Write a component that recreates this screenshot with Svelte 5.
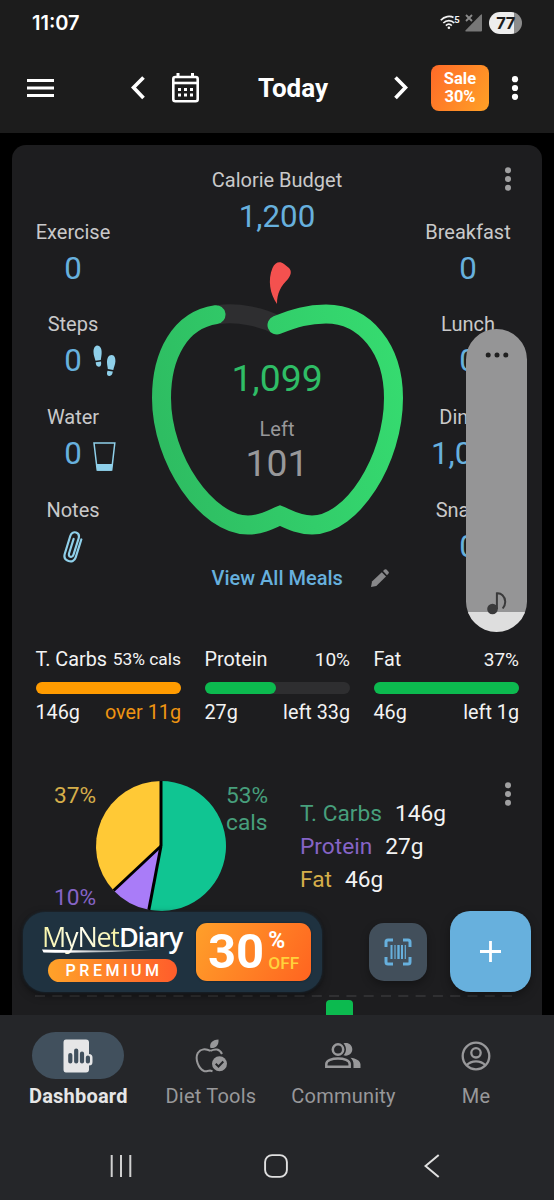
<script>
	//? variables
	let leftStats = [
		{ label: "Exercise", value: "0" },
		{ label: "Steps", value: "0", icon: "steps" },
		{ label: "Water", value: "0", icon: "water" },
		{ label: "Notes", icon: "clip" },
	];

	let meals = [
		{ label: "Breakfast", value: "0" },
		{ label: "Lunch", value: "0" },
		{ label: "Dinner", value: "1,099" },
		{ label: "Snacks", value: "0" },
	];

	let macros = [
		{ name: "T. Carbs", share: "53% cals", grams: "146g", rest: "over 11g", fill: 100, over: true },
		{ name: "Protein", share: "10%", grams: "27g", rest: "left 33g", fill: 49 },
		{ name: "Fat", share: "37%", grams: "46g", rest: "left 1g", fill: 100 },
	];

	let slices = [
		{ name: "T. Carbs", grams: "146g", percent: 53, color: "#10c592", tone: "green" },
		{ name: "Protein", grams: "27g", percent: 10, color: "#a97cf8", tone: "purple" },
		{ name: "Fat", grams: "46g", percent: 37, color: "#ffc936", tone: "yellow" },
	];

	let tabs = [
		{ label: "Dashboard", icon: "dashboard", active: true },
		{ label: "Diet Tools", icon: "diet" },
		{ label: "Community", icon: "people" },
		{ label: "Me", icon: "me" },
	];

	//? Logic
	const cx = 161;
	const cy = 66;
	const r = 65;

	function point(percent) {
		let angle = (percent / 100) * Math.PI * 2;
		return [cx + r * Math.sin(angle), cy - r * Math.cos(angle)];
	}

	function getPie(list) {
		let total = 0;
		return list.map((slice) => {
			let [x1, y1] = point(total);
			total += slice.percent;
			let [x2, y2] = point(total);
			let large = slice.percent > 50 ? 1 : 0;
			return {
				color: slice.color,
				x: x2,
				y: y2,
				d: `M${cx} ${cy}L${x1} ${y1}A${r} ${r} 0 ${large} 1 ${x2} ${y2}Z`,
			};
		});
	}

	let pie = getPie(slices);
</script>

<div class="screen">
	<header>
		<div class="status">
			<span class="clock">11:07</span>
			<svg class="wifi" width="20" height="16" viewBox="0 0 20 16">
				<g fill="none" stroke="#f2f2f2" stroke-width="1.7">
					<path d="M.8 5.3C4.5 1.2 10 .5 13.5 2.6" />
					<path d="M3.3 8C6.500 4.800 11.200 4.800 14.300 8" />
					<path d="M5.900 10.600C7.700 8.900 10 8.900 11.800 10.600" />
				</g>
				<circle cx="8.900" cy="12.800" r="1.300" fill="#f2f2f2" />
				<text x="14.300" y="7.700" font-size="9.500" font-weight="700" fill="#f2f2f2">5</text>
			</svg>
			<svg class="signal" width="18" height="18" viewBox="0 0 18 18">
				<path d="M17 .5V16.500Q17 17.500 16 17.500H1Q-.3 17.200 .6 16.200L15.500 1Q17 -.4 17 .5Z" fill="#777" />
				<path d="M1 1L7 7M7 1L1 7" stroke="#1c1c1c" stroke-width="4" />
				<path d="M1 1L7 7M7 1L1 7" stroke="#8a8a8a" stroke-width="1.900" />
			</svg>
			<span class="battery">77</span>
		</div>
		<div class="toolbar">
			<svg class="burger" width="27" height="20" viewBox="0 0 27 20">
				<path d="M0 2.500H27M0 10H27M0 17.500H27" stroke="#fff" stroke-width="2.800" />
			</svg>
			<svg class="prev" width="14" height="24" viewBox="0 0 14 24">
				<path d="M12.500 1.500L2.500 11.500L12.500 22" fill="none" stroke="#fff" stroke-width="3.700" />
			</svg>
			<svg class="calendar" width="27" height="30" viewBox="0 0 27 30">
				<path d="M6 0V5M20.500 0V5" stroke="#fff" stroke-width="3" />
				<rect x="1.300" y="4" width="24.400" height="24.300" rx="2" fill="none" stroke="#fff" stroke-width="2.600" />
				<path d="M1 10H26" stroke="#fff" stroke-width="2.600" />
				<path
					d="M6 16.500h3M12 16.500h3M18 16.500h3M6 22h3M12 22h3M18 22h3"
					stroke="#fff"
					stroke-width="3" />
			</svg>
			<h1>Today</h1>
			<svg width="14" height="24" viewBox="0 0 14 24">
				<path d="M1.500 1.500L11.500 11.500L1.500 22" fill="none" stroke="#fff" stroke-width="3.700" />
			</svg>
			<div class="sale"><span>Sale</span><span>30%</span></div>
			<svg width="8" height="24" viewBox="0 0 8 24" fill="#fff">
				<circle cx="4" cy="3.200" r="3.100" /><circle cx="4" cy="12" r="3.100" /><circle cx="4" cy="20.800" r="3.100" />
			</svg>
		</div>
	</header>

	<main>
		<div class="card">
			<section class="summary">
				<div class="column">
					{#each leftStats as stat}
						<div class="stat">
							<span class="label">{stat.label}</span>
							<div class="value-row">
								{#if stat.value}
									<span class="value">{stat.value}</span>
								{/if}
								{#if stat.icon === "steps"}
									<svg width="23" height="32" viewBox="0 0 23 32" fill="#8fd0ea">
										<path d="M4 .5C8 .5 9 5 8.600 9C8.300 12 8 13.500 7.800 15L2.500 15.700C2 13.500 .5 10.500 .5 7C.5 3.500 1.800 .8 4 .5Z" />
										<path d="M2.700 17.300L8 16.500C8.500 19.500 8 21.500 6 21.700C3.700 21.900 2.800 20 2.700 17.300Z" />
										<path d="M18.800 10C21.500 10.200 22.600 13 22.400 16.500C22.200 19.500 21 22 20.300 25L14.800 24C14.700 22 14 20 14 17.500C14 13 15.500 9.900 18.800 10Z" />
										<path d="M14.500 25.700L19.800 26.600C19.500 29.500 18.300 31.300 16 31C13.800 30.600 13.500 28.500 14.500 25.700Z" />
									</svg>
								{:else if stat.icon === "water"}
									<svg class="glass" width="23" height="30" viewBox="0 0 23 30">
										<path d="M1 1H21.800L18.700 28H4.200Z" fill="none" stroke="#8fd0ea" stroke-width="1.500" />
										<path d="M3.400 22H19.500L18.600 28.700H4.200Z" fill="#8fd0ea" />
									</svg>
								{:else if stat.icon === "clip"}
									<svg class="clip" width="20" height="32" viewBox="0 0 20 32" fill="none" stroke="#8fd0ea" stroke-width="2.200" stroke-linecap="round">
										<path d="M18.300 8.500L12.700 26.300C11.500 30 8.500 31 5.500 30C2.300 29 .7 26.500 1.800 22.800L7.200 5.300C8.200 2 10.500 .7 13 1.500C15.600 2.300 16.500 4.500 15.600 7.500L10.500 23.600C9.900 25.400 8.800 26.200 7.400 25.800C6 25.400 5.600 24 6.100 22.300L10.600 8" />
									</svg>
								{/if}
							</div>
						</div>
					{/each}
				</div>

				<div class="budget">
					<span class="label">Calorie Budget</span>
					<span class="value">1,200</span>
					<div class="apple">
						<svg width="286" height="280" viewBox="134 260 286 280">
							<defs>
								<linearGradient id="ring" x1="152" y1="400" x2="403" y2="340" gradientUnits="userSpaceOnUse">
									<stop offset="0" stop-color="#2ebd62" />
									<stop offset=".5" stop-color="#32cd6a" />
									<stop offset="1" stop-color="#36dc70" />
								</linearGradient>
							</defs>
							<path d="M277 304C270 294 267.500 280 272.500 268C275 262 280 261 284 264L289 268C292 271 291 275 288 279C281 286 277 293 277 304Z" fill="#f4514f" />
							<path d="M219 314.500C239 312 262 317 277 325" fill="none" stroke="#2e2e30" stroke-width="19" />
							<path
								d="M277 325C295 318 308 314 326 314C365 314 393.500 349 393.500 398C393.500 460 352 525 312 525C298 525 288 519 280 515.500C272 519 262 525 248 525C207 525 161.500 460 161.500 398C161.500 355 180 320 216 314.700"
								fill="none"
								stroke="url(#ring)"
								stroke-width="19"
								stroke-linecap="round" />
						</svg>
						<div class="inside">
							<span class="eaten">1,099</span>
							<span class="left">Left</span>
							<span class="remaining">101</span>
						</div>
					</div>
				</div>

				<div class="column">
					{#each meals as meal}
						<div class="stat">
							<span class="label">{meal.label}</span>
							<div class="value-row"><span class="value">{meal.value}</span></div>
						</div>
					{/each}
				</div>

				<svg class="more" width="8" height="24" viewBox="0 0 8 24" fill="#a0a0a1">
					<circle cx="4" cy="3.200" r="3" /><circle cx="4" cy="12" r="3" /><circle cx="4" cy="20.800" r="3" />
				</svg>
			</section>

			<div class="view-all">
				<span>View All Meals</span>
				<svg width="18" height="18" viewBox="0 0 18 18" fill="#88888a">
					<path d="M0 18L1 12.500L10.800 3.200L15 7.400L5.300 16.900Z" />
					<path d="M12 2L13.600 .6Q14.600 -.2 15.500 .6L17.500 2.700Q18.300 3.700 17.500 4.600L16 6.200Z" />
				</svg>
			</div>

			<section class="macros">
				{#each macros as macro}
					<div class="macro" class:over={macro.over}>
						<div class="macro-line">
							<span class="name">{macro.name}</span>
							<span class="share">{macro.share}</span>
						</div>
						<div class="bar"><div class="fill" style="width: {macro.fill}%"></div></div>
						<div class="macro-line">
							<span>{macro.grams}</span>
							<span class="rest">{macro.rest}</span>
						</div>
					</div>
				{/each}
			</section>

			<section class="breakdown">
				<svg class="pie" width="288" height="132" viewBox="12 0 288 132">
					{#each pie as slice}
						<path d={slice.d} fill={slice.color} />
					{/each}
					{#each pie as slice}
						<path d="M{cx} {cy}L{slice.x} {slice.y}" stroke="#000" stroke-width="3" />
					{/each}
					<text class="purple" x="54" y="125">10%</text>
					<text class="yellow" x="54" y="23">37%</text>
					<text class="green" x="226" y="23">53%</text>
					<text class="green" x="226" y="50">cals</text>
				</svg>
				<div class="legend">
					{#each slices as slice}
						<div><span class={slice.tone}>{slice.name}</span><span>{slice.grams}</span></div>
					{/each}
				</div>
				<svg class="more" width="8" height="24" viewBox="0 0 8 24" fill="#a0a0a1">
					<circle cx="4" cy="3.200" r="3" /><circle cx="4" cy="12" r="3" /><circle cx="4" cy="20.800" r="3" />
				</svg>
			</section>

			<svg class="chart" width="530" height="30" viewBox="12 985 530 30">
				<path d="M35 996H512" stroke="#37373a" stroke-width="1.500" stroke-dasharray="10 7.300" />
				<path d="M326 1015V1004Q326 1000 330 1000H349Q353 1000 353 1004V1015Z" fill="#0cba4f" />
			</svg>
		</div>

		<div class="actions">
			<div class="promo">
				<div class="brand">
					<div class="logo"><span>MyNet</span><b>Diary</b></div>
					<svg class="swoosh" width="122" height="6" viewBox="0 0 122 6">
						<defs>
							<linearGradient id="swoosh"><stop offset=".2" stop-color="#fff" /><stop offset="1" stop-color="#fff" stop-opacity=".1" /></linearGradient>
						</defs>
						<path d="M0 1.500L1.500 4.500Q60 5.500 120 1.500Q60 3.300 0 1.500Z" fill="url(#swoosh)" />
					</svg>
					<div class="premium">PREMIUM</div>
				</div>
				<div class="discount">
					<span class="number">30</span>
					<div><span class="percent">%</span><span class="off">OFF</span></div>
				</div>
			</div>
			<div class="scan">
				<svg width="28" height="28" viewBox="0 0 28 28" fill="none" stroke="#67b0dd">
					<path d="M2 9V4Q2 2 4 2H9M19 2H24Q26 2 26 4V9M26 19V24Q26 26 24 26H19M9 26H4Q2 26 2 24V19" stroke-width="3" />
					<path d="M7.500 7V21M18 7V21" stroke-width="2" />
					<path d="M11 7V21M21.300 7V21" stroke-width="1.200" />
					<path d="M14.500 7V21" stroke-width="2.400" />
				</svg>
			</div>
			<div class="add">
				<svg width="21" height="21" viewBox="0 0 21 21"><path d="M10.500 0V21M0 10.500H21" stroke="#fff" stroke-width="2.800" /></svg>
			</div>
		</div>
	</main>

	<footer>
		<nav>
			{#each tabs as tab}
				<div class="tab" class:active={tab.active}>
					<div class="pill">
						{#if tab.icon === "dashboard"}
							<svg width="30" height="34" viewBox="0 0 30 34">
								<path d="M3 .5H23Q26 .5 26 3.500V15Q29.500 15 29.500 18.500V23Q29.500 26.500 26 26.500V30.500Q26 33.500 23 33.500H3Q.5 33.500 .5 30.500V3.500Q.5 .5 3 .5Z" fill="#e6e6e7" />
								<path d="M7.300 16V22.500M13.200 11.500V22.500M19 14.500V22.500M24.900 18.500V22.500" stroke="#41505d" stroke-width="4.200" stroke-linecap="round" />
							</svg>
						{:else if tab.icon === "diet"}
							<svg width="32" height="34" viewBox="0 0 32 34">
								<path d="M15.500 11.800C10.500 9.300 5.500 9.800 2.800 14C-.3 20 3.500 29.500 9 32C11.500 33 12.500 31.500 15 31.500L17.500 32.300M15.500 11.800C20 9.500 24.500 9.700 27 15" fill="none" stroke="#98989a" stroke-width="2" />
								<path d="M15.500 9C14 5 17 .5 23.500 .5C24 6 21 9.500 15.500 9Z" fill="#98989a" />
								<circle cx="24.500" cy="24.800" r="7.500" fill="#98989a" />
								<path d="M20.700 24.800L23.500 27.500L28.300 22.500" fill="none" stroke="#252629" stroke-width="2" />
							</svg>
						{:else if tab.icon === "people"}
							<svg width="36" height="27" viewBox="0 0 36 27">
								<circle cx="13" cy="7.500" r="5.200" fill="none" stroke="#98989a" stroke-width="2.500" />
								<path d="M1.300 24.800V22C1.300 14.700 24.700 14.700 24.700 22V24.800Z" fill="none" stroke="#98989a" stroke-width="2.500" />
								<path d="M18.500 1.500C23 -.1 27.300 3 27.300 7.300C27.300 11.700 23.500 14.700 18.500 13.300C21.800 9.800 21.800 5 18.500 1.500Z" fill="#98989a" />
								<path d="M25.500 15.700C31 16.500 35.500 18.500 35.500 22.500V26H28.500V22.500C28.500 19.500 27.500 17.500 25.500 15.700Z" fill="#98989a" />
							</svg>
						{:else}
							<svg width="30" height="30" viewBox="0 0 30 30" fill="none" stroke="#98989a" stroke-width="2.300">
								<circle cx="15" cy="15" r="13.300" />
								<circle cx="15" cy="11.800" r="4.700" />
								<path d="M5.500 24.200C10.500 19 19.500 19 24.500 24.200" />
							</svg>
						{/if}
					</div>
					<span>{tab.label}</span>
				</div>
			{/each}
		</nav>
		<div class="system">
			<svg width="22" height="24" viewBox="0 0 22 24"><path d="M1.700 1V23M11 1V23M20.300 1V23" stroke="#d0d0d0" stroke-width="2" /></svg>
			<svg class="home" width="24" height="24" viewBox="0 0 24 24"><rect x="1.100" y="1.100" width="21.800" height="21.800" rx="7" fill="none" stroke="#e0e0e0" stroke-width="1.900" /></svg>
			<svg width="16" height="24" viewBox="0 0 16 24"><path d="M14.700 1L1.500 12L14.700 23" fill="none" stroke="#e0e0e0" stroke-width="2" /></svg>
		</div>
	</footer>

	<div class="volume">
		<svg width="24" height="6" viewBox="0 0 24 6" fill="#202020"><circle cx="3.200" cy="3" r="2.500" /><circle cx="12" cy="3" r="2.500" /><circle cx="20.800" cy="3" r="2.500" /></svg>
		<svg class="note" width="20" height="23" viewBox="0 0 20 23">
			<circle cx="5.500" cy="17" r="5.300" fill="#3a3a3b" />
			<path d="M9.900 17V1.300C14 .8 18 4 18.200 9.500C18.300 12 17.300 14.500 15.700 16.500" fill="none" stroke="#3a3a3b" stroke-width="2" />
		</svg>
	</div>
</div>

<style>
	:global(body) {
		margin: 0;
		background: #000;
	}

	.screen {
		position: relative;
		display: flex;
		flex-direction: column;
		width: 554px;
		height: 1200px;
		overflow: hidden;
		background: #000;
		color: #f3f3f3;
		font-family: Roboto, sans-serif;
	}

	svg {
		display: block;
		flex: none;
	}

	header {
		height: 133px;
		background: #1c1c1c;
	}

	.status {
		display: flex;
		align-items: center;
		height: 45px;
		padding: 0 32px;
	}

	.clock {
		flex: 1;
		font-family: Inter, sans-serif;
		font-size: 20px;
		font-weight: 600;
		color: #fff;
	}

	.signal {
		margin: 0 6px 0 5px;
	}

	.battery {
		width: 33px;
		height: 22px;
		border-radius: 11px;
		background: linear-gradient(90deg, #ededed 77%, #8c8c8c 77%);
		color: #1c1c1c;
		font-family: Inter, sans-serif;
		font-size: 16.500px;
		font-weight: 700;
		line-height: 22px;
		letter-spacing: -0.5px;
		text-align: center;
	}

	.toolbar {
		display: flex;
		align-items: center;
		height: 85px;
		padding-left: 27px;
	}

	.prev {
		margin: 0 27px 0 77px;
	}

	h1 {
		width: 188px;
		margin: 0 7px 0 0;
		font-size: 26px;
		font-weight: 700;
		line-height: 36px;
		text-align: center;
		color: #fff;
	}

	.sale {
		display: flex;
		flex-direction: column;
		justify-content: center;
		width: 58px;
		height: 46px;
		margin: 0 22px 0 23px;
		border-radius: 8px;
		background: linear-gradient(120deg, #ff6a28, #ffa126);
		color: #fff;
		font-size: 16.500px;
		font-weight: 700;
		line-height: 17.500px;
		text-align: center;
	}

	main {
		position: relative;
		flex: 1;
		min-height: 0;
		overflow: hidden;
		padding: 12px 12px 0;
	}

	.card {
		height: 870px;
		border-radius: 14px 14px 0 0;
		background: #1d1d1f;
	}

	.summary {
		display: grid;
		grid-template-columns: 122px 286px 96px 1fr;
		height: 414px;
	}

	.column {
		padding-top: 74.500px;
	}

	.stat {
		height: 92.800px;
	}

	.label,
	.value {
		display: block;
		text-align: center;
	}

	.label {
		font-size: 20px;
		line-height: 24px;
		color: #c9c9ca;
	}

	.value {
		grid-column: 2;
		font-size: 31.300px;
		line-height: 36px;
		color: #67b0dd;
	}

	.value-row {
		display: grid;
		grid-template-columns: 1fr auto 1fr;
		align-items: center;
		column-gap: 11px;
		height: 36px;
		margin-top: 7px;
	}

	.clip {
		grid-column: 2;
	}

	.glass {
		margin-top: 5px;
	}

	.budget {
		padding-top: 22.500px;
	}

	.budget > .value {
		margin-top: 7px;
	}

	.apple {
		display: grid;
		margin-top: 25.500px;
	}

	.apple > * {
		grid-area: 1 / 1;
	}

	.inside {
		display: flex;
		flex-direction: column;
		align-items: center;
		padding-top: 96px;
	}

	.eaten,
	.remaining {
		font-size: 37.300px;
		line-height: 44px;
	}

	.eaten {
		color: #2fbd66;
	}

	.left {
		margin-top: 17px;
		font-size: 20px;
		line-height: 24px;
		color: #98989a;
	}

	.remaining {
		color: #98989a;
	}

	.more {
		margin: 22px 0 0 -12px;
	}

	.view-all {
		display: flex;
		align-items: center;
		gap: 28px;
		height: 38px;
		padding-left: 199.500px;
		font-size: 20px;
		font-weight: 500;
		color: #67b0dd;
	}

	.macros {
		display: grid;
		grid-template-columns: repeat(3, 145.500px);
		gap: 23.500px;
		height: 133px;
		margin-top: 50px;
		padding-left: 23.500px;
	}

	.macro-line {
		display: flex;
		align-items: center;
		justify-content: space-between;
		height: 24px;
		font-size: 19.800px;
		white-space: nowrap;
	}

	.share {
		font-size: 19px;
	}

	.over .share {
		font-size: 17.400px;
	}

	.bar {
		height: 12px;
		margin: 11px 0 6px;
		border-radius: 6px;
		background: #2e2e30;
	}

	.fill {
		height: 12px;
		border-radius: 6px;
		background: #0cba4f;
	}

	.over .fill {
		background: #ff9b00;
	}

	.over .rest {
		color: #ee9412;
	}

	.breakdown {
		display: flex;
		height: 205px;
	}

	.pie text {
		font-size: 22.700px;
	}

	.green {
		color: #479f7c;
		fill: #479f7c;
	}

	.purple {
		color: #8664c6;
		fill: #8664c6;
	}

	.yellow {
		color: #d5ae4a;
		fill: #d5ae4a;
	}

	.legend {
		width: 204px;
		padding-top: 18px;
		font-size: 22.700px;
		line-height: 32.800px;
	}

	.legend div {
		display: flex;
		gap: 13px;
	}

	.breakdown .more {
		margin: 2px 0 0;
	}

	.actions {
		position: absolute;
		left: 23px;
		top: 778px;
		display: flex;
		align-items: center;
	}

	.promo {
		display: flex;
		align-items: center;
		box-sizing: border-box;
		width: 299px;
		height: 80px;
		padding-left: 19px;
		border-radius: 22px;
		background: #1f3240;
		box-shadow: 0 0 3px #1f3240, 0 3px 8px rgba(0, 0, 0, 0.5);
	}

	.brand {
		width: 154px;
	}

	.logo {
		height: 30px;
		font-family: "Open Sans", sans-serif;
		font-size: 27px;
		line-height: 30px;
		letter-spacing: -1.200px;
		white-space: nowrap;
		color: #fff;
	}

	.logo span {
		background: linear-gradient(90deg, #f8f5a8, #fffef0 50%, #f5f2a0);
		background-clip: text;
		color: transparent;
	}

	.logo b {
		font-weight: 600;
	}

	.swoosh {
		margin: -4px 0 0;
	}

	.premium {
		width: 129px;
		height: 23px;
		margin: 5px 0 0 6px;
		border-radius: 12px;
		background: linear-gradient(90deg, #ffa229, #ff5d2b);
		color: #fff;
		font-size: 16px;
		font-weight: 500;
		line-height: 24px;
		letter-spacing: 3.500px;
		text-indent: 3px;
		text-align: center;
	}

	.discount {
		display: flex;
		align-items: center;
		box-sizing: border-box;
		width: 115px;
		height: 58px;
		padding-left: 12px;
		border-radius: 11px;
		background: linear-gradient(120deg, #ffa02a, #ff6420);
		box-shadow: 0 0 2px #10202c;
		color: #fff;
	}

	.number {
		font-size: 49px;
		font-weight: 700;
		line-height: 58px;
	}

	.percent,
	.off {
		display: block;
		font-weight: 500;
		line-height: 22px;
	}

	.percent {
		margin-left: 4px;
		font-size: 23px;
		font-weight: 700;
	}

	.off {
		margin-left: 4px;
		font-size: 17.300px;
		color: #ffd23c;
	}

	.scan {
		display: grid;
		place-items: center;
		width: 58px;
		height: 58px;
		margin: 0 23px 0 47px;
		border-radius: 15px;
		background: #424f5b;
		box-shadow: 0 4px 8px rgba(0, 0, 0, 0.3);
	}

	.add {
		display: grid;
		place-items: center;
		width: 81px;
		height: 81px;
		border-radius: 20px;
		background: #67b0dd;
		box-shadow: 0 4px 10px rgba(0, 0, 0, 0.35);
	}

	footer {
		height: 185px;
		background: #252629;
	}

	nav {
		display: grid;
		grid-template-columns: repeat(4, 132.600px);
		padding: 17px 0 0 12px;
	}

	.tab {
		display: flex;
		flex-direction: column;
		align-items: center;
		font-size: 20px;
		line-height: 24px;
		letter-spacing: 0.200px;
		color: #98989a;
	}

	.tab span {
		margin-top: 5px;
	}

	.active {
		font-weight: 700;
		color: #e6e6e7;
	}

	.pill {
		display: grid;
		place-items: center;
		width: 92px;
		height: 47px;
		border-radius: 24px;
	}

	.active .pill {
		background: #41505d;
	}

	.system {
		display: flex;
		justify-content: space-between;
		margin: 46px 114px 0 110px;
	}

	.home {
		margin-right: 4px;
	}

	.volume {
		position: absolute;
		left: 466px;
		top: 329px;
		display: flex;
		flex-direction: column;
		align-items: center;
		justify-content: space-between;
		box-sizing: border-box;
		width: 61px;
		height: 303px;
		padding: 23px 0 17px;
		border-radius: 31px;
		background: linear-gradient(#959596 283px, #dedede 283px);
	}
</style>
